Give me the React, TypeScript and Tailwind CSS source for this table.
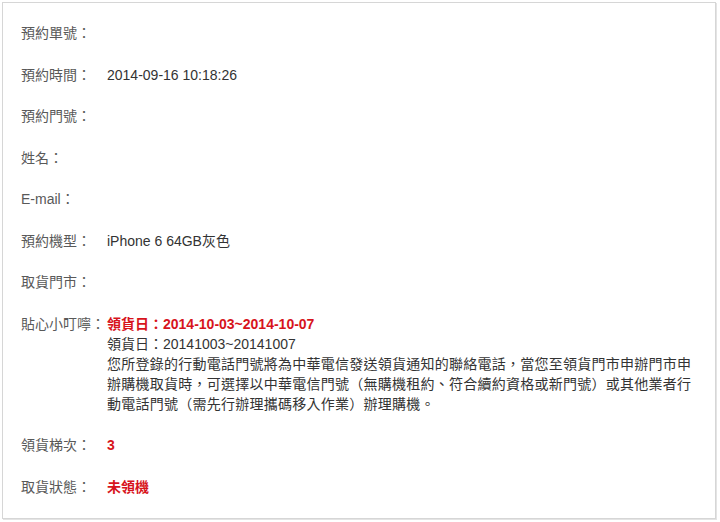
const FONT = "font-['Liberation_Sans','Noto_Sans_CJK_TC',sans-serif]";

type Row = { label: string; value?: React.ReactNode };

const rows: Row[] = [
  { label: "預約單號：" },
  { label: "預約時間：", value: "2014-09-16 10:18:26" },
  { label: "預約門號：" },
  { label: "姓名：" },
  { label: "E-mail：" },
  { label: "預約機型：", value: "iPhone 6 64GB灰色" },
  { label: "取貨門市：" },
  {
    label: "貼心小叮嚀：",
    value: (
      <div>
        <div className="font-bold text-[#d7141c]">領貨日：2014-10-03~2014-10-07</div>
        <div>領貨日：20141003~20141007</div>
        <div className="tracking-[0.25px]">
          <div className="whitespace-nowrap">
            您所登錄的行動電話門號將為中華電信發送領貨通知的聯絡電話，當您至領貨門市申辦門市申
          </div>
          <div className="whitespace-nowrap">
            辦購機取貨時，可選擇以中華電信門號（無購機租約、符合續約資格或新門號）或其他業者行
          </div>
          <div className="whitespace-nowrap">動電話門號（需先行辦理攜碼移入作業）辦理購機。</div>
        </div>
      </div>
    ),
  },
  { label: "領貨梯次：", value: <span className="font-bold text-[#d7141c]">3</span> },
  { label: "取貨狀態：", value: <span className="font-bold text-[#d7141c]">未領機</span> },
];

export default function App() {
  return (
    <div className={`h-[522px] w-[720px] bg-white p-[2px] ${FONT}`}>
      <div className="h-[517px] w-[714px] border border-[#d6d6d6] bg-white pl-[18px] pt-[20px] shadow-[1px_1px_0_#e4e4e4]">
        <div className="flex flex-col gap-[21.5px] text-[14px] leading-[20px]">
          {rows.map((r) => (
            <div key={r.label} className="flex">
              <div className="w-[86px] shrink-0 whitespace-nowrap text-[#595959]">{r.label}</div>
              <div className="text-[#333]">{r.value}</div>
            </div>
          ))}
        </div>
      </div>
    </div>
  );
}
